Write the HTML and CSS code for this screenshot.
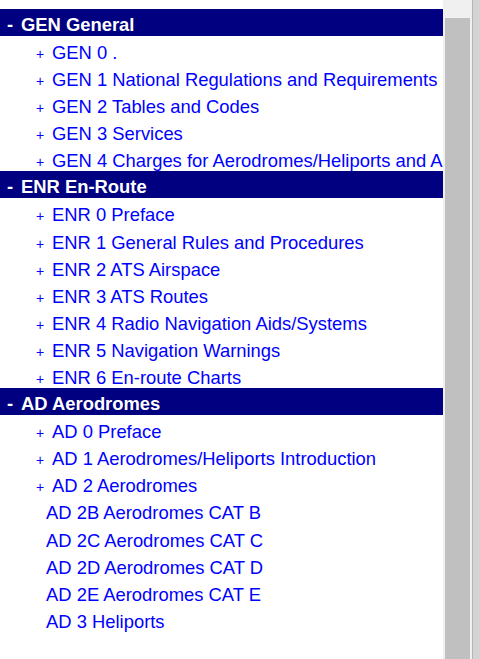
FILE: index.html
```html
<!DOCTYPE html>
<html>
<head>
<meta charset="utf-8">
<link rel="stylesheet" href="styles.css">
</head>
<body>
<div class="frame">
  <div class="menu">
    <div class="section">
      <div class="head"><span class="sign">-</span><span>GEN General</span></div>
      <div class="item"><span class="plus">+</span><a>GEN 0 .</a></div>
      <div class="item"><span class="plus">+</span><a>GEN 1 National Regulations and Requirements</a></div>
      <div class="item"><span class="plus">+</span><a>GEN 2 Tables and Codes</a></div>
      <div class="item"><span class="plus">+</span><a>GEN 3 Services</a></div>
      <div class="item"><span class="plus">+</span><a>GEN 4 Charges for Aerodromes/Heliports and Air Navigation Services</a></div>
    </div>
    <div class="section">
      <div class="head"><span class="sign">-</span><span>ENR En-Route</span></div>
      <div class="item"><span class="plus">+</span><a>ENR 0 Preface</a></div>
      <div class="item"><span class="plus">+</span><a>ENR 1 General Rules and Procedures</a></div>
      <div class="item"><span class="plus">+</span><a>ENR 2 ATS Airspace</a></div>
      <div class="item"><span class="plus">+</span><a>ENR 3 ATS Routes</a></div>
      <div class="item"><span class="plus">+</span><a>ENR 4 Radio Navigation Aids/Systems</a></div>
      <div class="item"><span class="plus">+</span><a>ENR 5 Navigation Warnings</a></div>
      <div class="item"><span class="plus">+</span><a>ENR 6 En-route Charts</a></div>
    </div>
    <div class="section">
      <div class="head"><span class="sign">-</span><span>AD Aerodromes</span></div>
      <div class="item"><span class="plus">+</span><a>AD 0 Preface</a></div>
      <div class="item"><span class="plus">+</span><a>AD 1 Aerodromes/Heliports Introduction</a></div>
      <div class="item"><span class="plus">+</span><a>AD 2 Aerodromes</a></div>
      <div class="item leaf"><a>AD 2B Aerodromes CAT B</a></div>
      <div class="item leaf"><a>AD 2C Aerodromes CAT C</a></div>
      <div class="item leaf"><a>AD 2D Aerodromes CAT D</a></div>
      <div class="item leaf"><a>AD 2E Aerodromes CAT E</a></div>
      <div class="item leaf"><a>AD 3 Heliports</a></div>
    </div>
  </div>
  <div class="scrollbar"><div class="thumb"></div></div>
  <div class="edge"></div>
</div>
</body>
</html>
```
FILE: styles.css
```css
html, body {
  margin: 0;
  padding: 0;
  background: #ffffff;
}
body {
  font-family: "Liberation Sans", Arial, sans-serif;
  font-size: 18.4px;
}
.frame {
  display: flex;
  height: 659px;
  width: 480px;
  overflow: hidden;
}
.menu {
  width: 443px;
  flex: none;
  padding-top: 9px;
  overflow: hidden;
}
.head {
  background: #000080;
  color: #ffffff;
  font-weight: bold;
  height: 27px;
  line-height: 27px;
  padding-top: 2px;
  box-sizing: border-box;
  display: flex;
  white-space: nowrap;
}
.sign {
  width: 14px;
  flex: none;
  padding-left: 7px;
}
.item {
  height: 27.1px;
  line-height: 27px;
  display: flex;
  align-items: baseline;
  white-space: nowrap;
  padding-top: 3px;
  box-sizing: border-box;
}
.plus {
  color: #0000ff;
  font-size: 14px;
  width: 16px;
  flex: none;
  padding-left: 36px;
}
.leaf {
  padding-left: 46px;
}
.item a {
  color: #0000ff;
  text-decoration: none;
}
.scrollbar {
  width: 29px;
  flex: none;
  background: #f0f0f0;
  padding: 18px 2px 0 2px;
  box-sizing: border-box;
}
.thumb {
  background: #c0c0c0;
  height: 100%;
  width: 25px;
}
.edge {
  flex: 1;
  background: #d4d4d4;
  border-left: 1px solid #b4b4b4;
}
```
